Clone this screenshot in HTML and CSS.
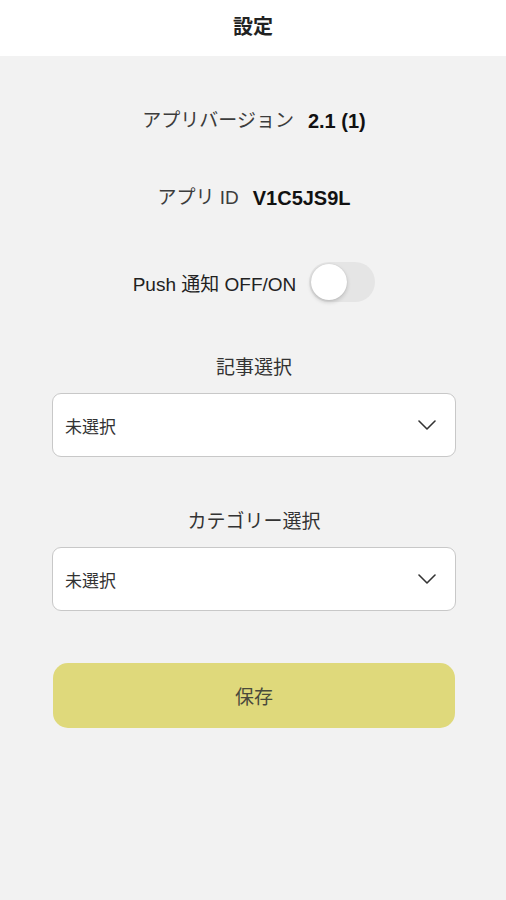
FILE: index.html
```html
<!DOCTYPE html>
<html lang="ja">
<head>
<meta charset="utf-8">
<title>設定</title>
<link rel="stylesheet" href="styles.css">
</head>
<body>
<header class="topbar">
  <h1 class="title">設定</h1>
</header>
<main class="settings">
  <p class="info-row info-version"><span class="info-label">アプリバージョン</span><span class="info-value">2.1 (1)</span></p>
  <p class="info-row info-id"><span class="info-label">アプリ ID</span><span class="info-value">V1C5JS9L</span></p>
  <div class="push-row">
    <span class="push-label">Push 通知 OFF/ON</span>
    <span class="toggle"><span class="knob"></span></span>
  </div>
  <section class="field field-article">
    <div class="field-label">記事選択</div>
    <div class="select">
      <span class="select-text">未選択</span>
      <svg class="chevron" width="18" height="10" viewBox="0 0 18 10"><path d="M1 1 L9 9 L17 1" fill="none" stroke="#333" stroke-width="1.6" stroke-linecap="round" stroke-linejoin="round"/></svg>
    </div>
  </section>
  <section class="field field-category">
    <div class="field-label">カテゴリー選択</div>
    <div class="select">
      <span class="select-text">未選択</span>
      <svg class="chevron" width="18" height="10" viewBox="0 0 18 10"><path d="M1 1 L9 9 L17 1" fill="none" stroke="#333" stroke-width="1.6" stroke-linecap="round" stroke-linejoin="round"/></svg>
    </div>
  </section>
  <button class="save" type="button">保存</button>
</main>
</body>
</html>
```
FILE: styles.css
```css
* { box-sizing: border-box; }
html, body {
  margin: 0;
  padding: 0;
  background: #f2f2f2;
  font-family: "Liberation Sans", "Noto Sans CJK JP", sans-serif;
  color: #333;
}
.topbar {
  height: 56px;
  background: #fff;
  display: flex;
  align-items: center;
  justify-content: center;
}
.title {
  margin: 0;
  font-size: 20px;
  font-weight: 700;
  color: #222;
  line-height: 24px;
  padding-bottom: 2px;
}
.settings {
  display: flex;
  flex-direction: column;
  align-items: stretch;
  padding: 0 50px 0 52px;
}
.info-row {
  margin: 0;
  display: flex;
  justify-content: center;
  align-items: center;
  gap: 14px;
  line-height: 24px;
  height: 24px;
}
.info-version { margin-top: 53px; }
.info-id { margin-top: 53px; }
.info-label {
  font-size: 19px;
  color: #3c3c3c;
}
.info-value {
  font-size: 20px;
  font-weight: 700;
  color: #111;
}
.push-row {
  margin-top: 52px;
  display: flex;
  justify-content: center;
  align-items: center;
  gap: 13px;
  height: 40px;
}
.push-label {
  font-size: 19px;
  color: #222;
}
.toggle {
  width: 66px;
  height: 40px;
  border-radius: 20px;
  background: #e5e5e5;
  display: flex;
  align-items: center;
  padding: 0 2px;
}
.knob {
  width: 36px;
  height: 36px;
  border-radius: 50%;
  background: #fff;
  box-shadow: 0 2px 4px rgba(0,0,0,0.18), 0 0 1px rgba(0,0,0,0.15);
}
.field {
  display: flex;
  flex-direction: column;
}
.field-article { margin-top: 54px; }
.field-category { margin-top: 53px; }
.field-label {
  text-align: center;
  font-size: 19px;
  line-height: 24px;
  color: #333;
  margin-bottom: 13px;
}
.select {
  height: 64px;
  background: #fff;
  border: 1px solid #c8c8c8;
  border-radius: 9px;
  display: flex;
  align-items: center;
  justify-content: space-between;
  padding: 0 19px 0 12px;
}
.select-text {
  font-size: 17px;
  color: #333;
}
.chevron { display: block; }
.save {
  margin: 52px 1px 0 1px;
  height: 65px;
  border: none;
  border-radius: 15px;
  background: #dfd97b;
  font-family: "Liberation Sans", "Noto Sans CJK JP", sans-serif;
  font-size: 19px;
  color: #4a4a3c;
  cursor: pointer;
}
```
